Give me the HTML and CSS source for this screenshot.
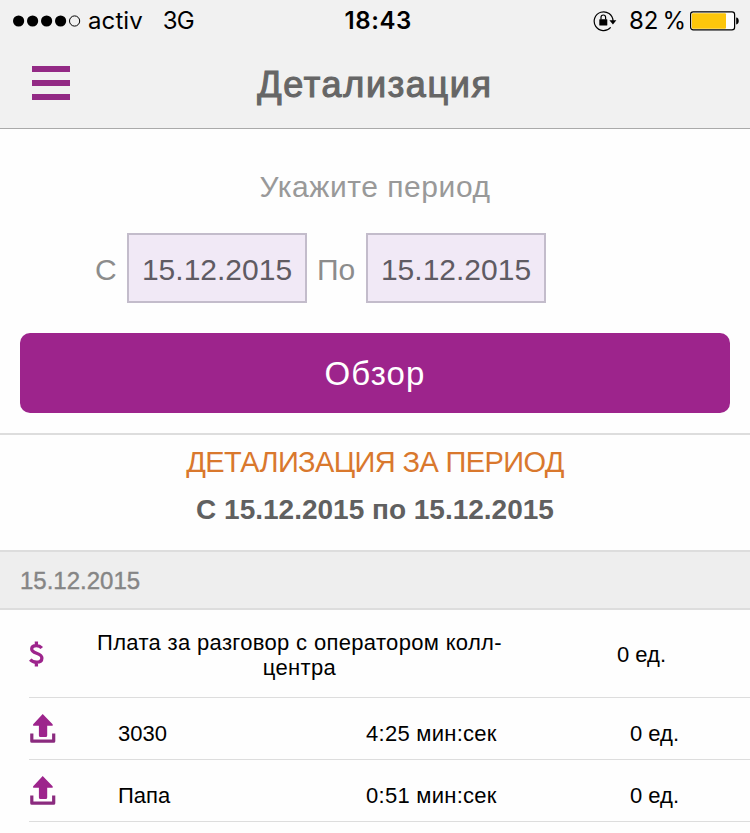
FILE: index.html
```html
<!DOCTYPE html>
<html lang="ru">
<head>
<meta charset="utf-8">
<title>Детализация</title>
<link rel="stylesheet" href="styles.css">
</head>
<body>
<header class="header">
  <div class="status">
    <div class="status-left">
      <svg class="signal" width="68" height="12" viewBox="0 0 68 12"><g fill="#000"><circle cx="5.6" cy="6" r="5.6"/><circle cx="19.6" cy="6" r="5.6"/><circle cx="33.6" cy="6" r="5.6"/><circle cx="47.6" cy="6" r="5.6"/></g><circle cx="61.6" cy="6" r="5.1" fill="none" stroke="#000" stroke-width="1"/></svg>
      <span class="carrier">activ</span>
      <span class="network">3G</span>
    </div>
    <time class="clock">18:43</time>
    <div class="status-right">
      <svg class="lock" width="24" height="22" viewBox="0 0 24 22"><path d="M17.7 17.4A9.4 9.4 0 1 1 20 11" fill="none" stroke="#000" stroke-width="1.2"/><path d="M16.4 10.2h7l-3.5 4.2z"/><rect x="6.3" y="9.2" width="8" height="6.4" rx=".6"/><path d="M8 9.5V7.3a2.3 2.3 0 0 1 4.6 0v2.2" fill="none" stroke="#000" stroke-width="1.2"/></svg>
      <span class="percent">82 %</span>
      <svg class="battery" width="50" height="20" viewBox="0 0 50 20"><rect x=".6" y=".9" width="44" height="18" rx="2.6" fill="#fff" stroke="#000" stroke-width="1.2"/><rect x="1.8" y="2.2" width="34.2" height="15.5" rx="1" fill="#fdc60b"/><path d="M46.2 6.6c3.4 0 3.4 6.8 0 6.8z"/></svg>
    </div>
  </div>
  <div class="navbar">
    <div class="menu"><i></i><i></i><i></i></div>
    <h1 class="title">Детализация</h1>
  </div>
</header>
<section class="form">
  <p class="prompt">Укажите период</p>
  <div class="range">
    <span class="label">С</span>
    <span class="field">15.12.2015</span>
    <span class="label label-to">По</span>
    <span class="field">15.12.2015</span>
  </div>
  <div class="button">Обзор</div>
</section>
<section class="summary">
  <h2 class="summary-title">ДЕТАЛИЗАЦИЯ ЗА ПЕРИОД</h2>
  <p class="summary-period">С 15.12.2015 по 15.12.2015</p>
</section>
<div class="date">15.12.2015</div>
<ul class="list">
  <li class="row row-fee">
    <svg class="dollar" width="16" height="26" viewBox="0 0 16 26"><path d="M12.8 7C11.3 5.3 9.4 4.7 7.3 4.7 4.6 4.7 2.7 6 2.7 8c0 5.2 10.2 3.2 10.2 9 0 2.8-2.2 4.2-5.5 4.2-2.5 0-4.6-.9-6.2-2.6M7.4 .6v4M7.4 21v4.6" fill="none" stroke="#9d248c" stroke-width="3.3"/></svg>
    <div class="fee">Плата за разговор с оператором колл-<br>центра</div>
    <div class="fee-cost">0 ед.</div>
  </li>
  <li class="row">
    <svg class="upload" width="26" height="30" viewBox="0 0 26 30"><path d="M12.7 0 22.6 10.2q1 1.5-.8 1.5H17.2v9.8q0 1.5-1.5 1.5H10.4q-1.5 0-1.5-1.5v-9.8H4q-1.8 0-.8-1.5z" fill="#9d248c"/><path d="M1.8 19.6v7.6h21.9v-7.6" fill="none" stroke="#8b2b7f" stroke-width="3.2" stroke-linejoin="round"/></svg>
    <div class="name">3030</div><div class="duration">4:25 мин:сек</div><div class="cost">0 ед.</div>
  </li>
  <li class="row">
    <svg class="upload" width="26" height="30" viewBox="0 0 26 30"><path d="M12.7 0 22.6 10.2q1 1.5-.8 1.5H17.2v9.8q0 1.5-1.5 1.5H10.4q-1.5 0-1.5-1.5v-9.8H4q-1.8 0-.8-1.5z" fill="#9d248c"/><path d="M1.8 19.6v7.6h21.9v-7.6" fill="none" stroke="#8b2b7f" stroke-width="3.2" stroke-linejoin="round"/></svg>
    <div class="name">Папа</div><div class="duration">0:51 мин:сек</div><div class="cost">0 ед.</div>
  </li>
</ul>
</body>
</html>
```
FILE: styles.css
```css
* { box-sizing: border-box; margin: 0; padding: 0; }
body { width: 750px; height: 833px; overflow: hidden; background: #fefefe; font-family: "Liberation Sans", sans-serif; color: #000; }
.header { height: 129px; background: #f1f1f1; border-bottom: 1px solid #aaa; }
.status { display: grid; grid-template-columns: 1fr 70px 1fr; height: 40px; padding: 0 10px 0 13px; font: 24px/42px Inter, sans-serif; }
.status-left, .status-right { display: flex; align-items: center; height: 41px; }
.status-right { justify-content: flex-end; }
.carrier { margin-left: 7px; letter-spacing: 0.1px; }
.network { margin-left: 20px; letter-spacing: -0.9px; }
.clock { padding-left: 3px; font-weight: 600; text-align: center; letter-spacing: 0.6px; white-space: nowrap; }
.lock { margin-right: 12px; }
.percent { margin-right: 4px; white-space: nowrap; letter-spacing: -0.2px; word-spacing: -2px; }
.navbar { display: grid; grid-template-columns: 70px 1fr 70px; height: 88px; }
.menu { display: flex; flex-direction: column; gap: 8px; padding: 26px 0 0 32px; }
.menu i { width: 38px; height: 6px; background: #932a85; }
.title { text-align: center; font-size: 36px; font-weight: 400; line-height: 89px; color: #666; letter-spacing: 1.65px; -webkit-text-stroke: 1.1px #666; }
.form { height: 304px; padding: 38px 20px 0; }
.prompt { height: 40px; line-height: 40px; font-size: 30px; text-align: center; color: #999; letter-spacing: 0.55px; }
.range { display: flex; align-items: center; height: 70px; margin: 26px 0 30px 75px; font-size: 30px; }
.label { width: 32px; line-height: 70px; padding-top: 3px; color: #8c8c8c; }
.label-to { width: 59px; padding-left: 10px; }
.field { width: 180px; height: 70px; border: 2px solid #c3bccb; background: #f1e9f6; color: #5f5b63; line-height: 69px; text-align: center; }
.button { height: 80px; line-height: 82px; border-radius: 10px; background: #9d248c; color: #fff; text-align: center; font-size: 33px; letter-spacing: 1.1px; }
.summary { height: 117px; padding-top: 7px; border-top: 2px solid #ddd; text-align: center; }
.summary-title { height: 40px; line-height: 40px; font-size: 29px; font-weight: 400; color: #d9782d; letter-spacing: -0.63px; }
.summary-period { height: 40px; margin-top: 8px; line-height: 40px; font-size: 28px; font-weight: 700; color: #606060; }
.date { height: 60px; padding-left: 20px; border: solid #ddd; border-width: 2px 0; background: #eee; color: #858585; font-size: 24px; line-height: 57px; -webkit-text-stroke: 0.4px #858585; }
.list { list-style: none; margin-left: 29px; font-size: 22px; }
.row { display: grid; grid-template-columns: 89px 248px 264px 1fr; height: 62px; border-bottom: 1px solid #ddd; line-height: 25px; }
.row-fee { grid-template-columns: 42px 457px 1fr; height: 88px; }
.dollar { margin-top: 31px; }
.fee { padding-top: 20px; text-align: center; letter-spacing: 0.33px; }
.fee-cost { padding: 32px 0 0 89px; }
.upload { margin: 16px 0 0 1px; }
.name, .duration, .cost { padding-top: 23px; }
.duration { letter-spacing: 0.27px; }
```
